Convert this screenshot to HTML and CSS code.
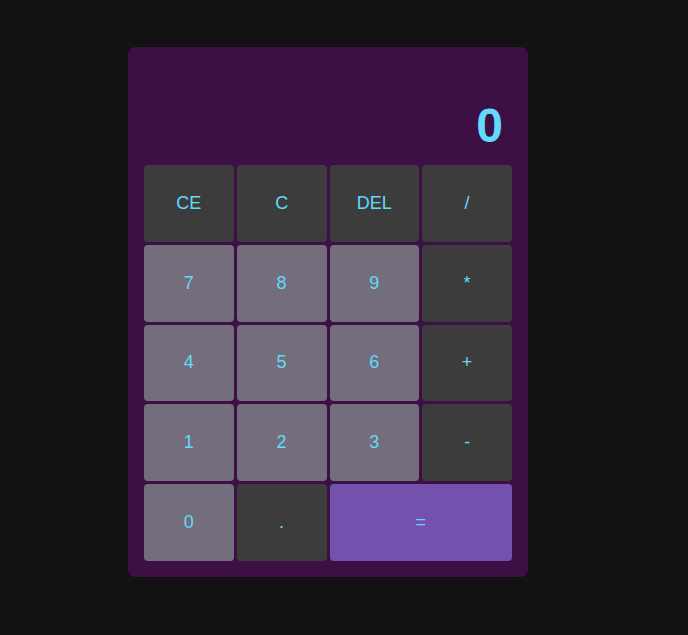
FILE: index.html
```html
<!DOCTYPE html>
<html>
<head>
<meta charset="utf-8">
<link rel="stylesheet" href="styles.css">
</head>
<body>
<div class="page">
  <div class="calc">
    <div class="display">0</div>
    <div class="keys">
      <button class="key dark">CE</button>
      <button class="key dark">C</button>
      <button class="key dark">DEL</button>
      <button class="key dark">/</button>
      <button class="key num">7</button>
      <button class="key num">8</button>
      <button class="key num">9</button>
      <button class="key dark">*</button>
      <button class="key num">4</button>
      <button class="key num">5</button>
      <button class="key num">6</button>
      <button class="key dark">+</button>
      <button class="key num">1</button>
      <button class="key num">2</button>
      <button class="key num">3</button>
      <button class="key dark">-</button>
      <button class="key num">0</button>
      <button class="key dark">.</button>
      <button class="key equal">=</button>
    </div>
  </div>
</div>
</body>
</html>
```
FILE: styles.css
```css
html, body {
  margin: 0;
  padding: 0;
  background: #121212;
  font-family: "Liberation Sans", Arial, sans-serif;
}
.page {
  height: 635px;
  display: flex;
  justify-content: center;
  padding: 47px 32px 0 0;
  box-sizing: border-box;
}
.calc {
  width: 400px;
  height: 530px;
  box-sizing: border-box;
  padding: 16px;
  background: #3d1045;
  border-radius: 8px;
  display: flex;
  flex-direction: column;
}
.display {
  height: 102px;
  box-sizing: border-box;
  display: flex;
  align-items: flex-end;
  justify-content: flex-end;
  padding: 0 9px 12px 0;
  color: #61dafb;
  font-size: 48px;
  font-weight: bold;
  line-height: 1.15;
}
.keys {
  display: grid;
  grid-template-columns: repeat(4, 1fr);
  grid-auto-rows: 76.8px;
  gap: 3px;
}
.key {
  border: none;
  border-radius: 4px;
  font-family: "Liberation Sans", Arial, sans-serif;
  font-size: 18px;
  color: #61dafb;
  padding: 0;
  cursor: pointer;
}
.dark { background: #3c3c3c; }
.num { background: #746e7c; }
.equal {
  background: #7351ad;
  grid-column: span 2;
}
```
